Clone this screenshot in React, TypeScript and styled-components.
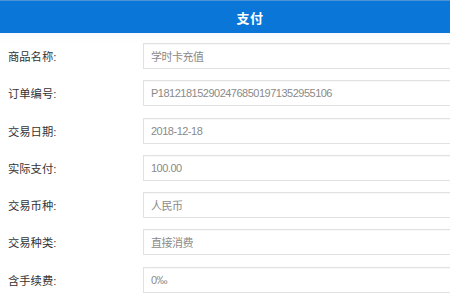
import React from 'react';
import styled, { createGlobalStyle } from 'styled-components';

type Field = { label: string; value: string };

const fields: Field[] = [
  { label: '商品名称:', value: '学时卡充值' },
  { label: '订单编号:', value: 'P1812181529024768501971352955106' },
  { label: '交易日期:', value: '2018-12-18' },
  { label: '实际支付:', value: '100.00' },
  { label: '交易币种:', value: '人民币' },
  { label: '交易种类:', value: '直接消费' },
  { label: '含手续费:', value: '0‰' },
];

const GlobalStyle = createGlobalStyle`
  html, body {
    margin: 0;
    padding: 0;
    background: #fff;
    overflow: hidden;
  }
  body {
    font-family: "Liberation Sans", "Noto Sans CJK SC", sans-serif;
  }
`;

const Page = styled.div`
  width: 470px;
  height: 300px;
  background: #fff;
`;

const Header = styled.div`
  height: 32px;
  border-top: 1px solid #4b93d2;
  background: #0a77d8;
  display: flex;
  align-items: center;
  justify-content: center;
  padding-left: 30px;
`;

const Title = styled.h1`
  margin: 0;
  color: #fff;
  font-size: 13px;
  font-weight: bold;
  letter-spacing: 0.5px;
`;

const Form = styled.div`
  padding-top: 10px;
  display: flex;
  flex-direction: column;
  gap: 11.3px;
  background: linear-gradient(#f7fbff 0, #fff 10px);
`;

const Row = styled.div`
  display: flex;
  align-items: center;
  height: 26px;
`;

const Label = styled.span`
  width: 135px;
  padding-left: 8px;
  font-size: 11.3px;
  color: #333;
`;

const Box = styled.div`
  flex: 1;
  height: 24px;
  border: 1px solid #e1e1e1;
  box-shadow: inset 0 1px 1px rgba(0, 0, 0, 0.03);
  display: flex;
  align-items: center;
  padding-left: 7px;
  font-size: 11px;
  letter-spacing: -0.5px;
  color: #8a8a8a;
`;

const App: React.FC = () => {
  return (
    <Page>
      <GlobalStyle />
      <Header>
        <Title>支付</Title>
      </Header>
      <Form>
        {fields.map((f) => (
          <Row key={f.label}>
            <Label>{f.label}</Label>
            <Box>{f.value}</Box>
          </Row>
        ))}
      </Form>
    </Page>
  );
};

export default App;
